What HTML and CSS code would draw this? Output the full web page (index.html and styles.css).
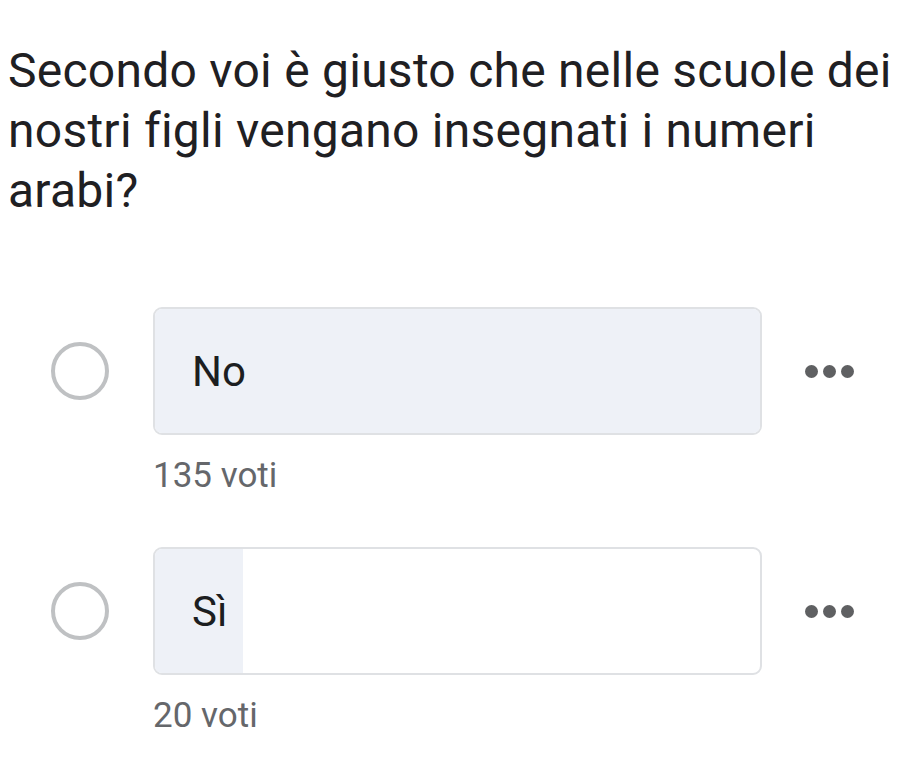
FILE: index.html
```html
<!DOCTYPE html>
<html lang="it">
<head>
<meta charset="utf-8">
<title>Sondaggio</title>
<link rel="stylesheet" href="styles.css">
</head>
<body>
<div class="page">
  <h1 class="question">Secondo voi è giusto che nelle scuole dei nostri figli vengano insegnati i numeri arabi?</h1>
  <div class="options">
    <div class="option">
      <div class="row">
        <span class="radio"></span>
        <div class="bar">
          <div class="fill" style="width:100%"></div>
          <span class="label">No</span>
        </div>
        <span class="more"><i></i><i></i><i></i></span>
      </div>
      <div class="votes">135 voti</div>
    </div>
    <div class="option">
      <div class="row">
        <span class="radio"></span>
        <div class="bar">
          <div class="fill" style="width:14.6%"></div>
          <span class="label">Sì</span>
        </div>
        <span class="more"><i></i><i></i><i></i></span>
      </div>
      <div class="votes">20 voti</div>
    </div>
  </div>
</div>
</body>
</html>
```
FILE: styles.css
```css
html, body {
  margin: 0;
  padding: 0;
  background: #ffffff;
}
.page {
  width: 901px;
  height: 779px;
  overflow: hidden;
  font-family: Roboto, "Liberation Sans", sans-serif;
}
.question {
  margin: 41px 0 0 0;
  padding: 0 4px 0 8px;
  font-size: 48px;
  line-height: 60px;
  letter-spacing: 0.25px;
  font-weight: 400;
  color: #1f2023;
}
.options {
  margin-top: 86px;
  display: flex;
  flex-direction: column;
  gap: 51px;
}
.row {
  display: flex;
  align-items: center;
  padding-left: 51px;
}
.radio {
  width: 50px;
  height: 50px;
  border: 4px solid #bfc1c3;
  border-radius: 50%;
  flex: none;
}
.bar {
  position: relative;
  margin-left: 44px;
  width: 609px;
  height: 128px;
  box-sizing: border-box;
  border: 2px solid #dfe1e4;
  border-radius: 9px;
  overflow: hidden;
  display: flex;
  align-items: center;
  background: #ffffff;
}
.fill {
  position: absolute;
  left: 0;
  top: 0;
  bottom: 0;
  background: #eef1f7;
}
.label {
  position: relative;
  padding-left: 37px;
  font-size: 42px;
  color: #1c1e21;
}
.more {
  margin-left: 43px;
  display: flex;
  gap: 5px;
}
.more i {
  width: 13px;
  height: 13px;
  border-radius: 50%;
  background: #5f6062;
}
.votes {
  margin: 21px 0 0 153px;
  font-size: 35px;
  line-height: 40px;
  color: #65676b;
}
```
